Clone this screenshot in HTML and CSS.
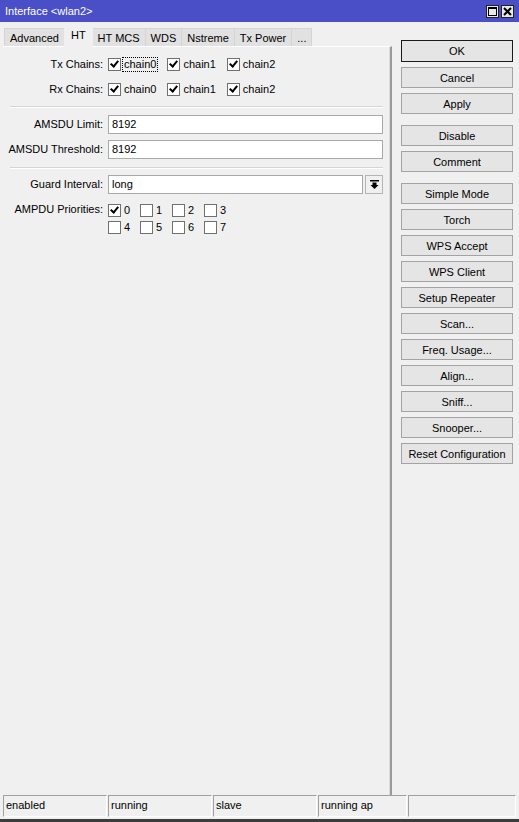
FILE: index.html
```html
<!DOCTYPE html>
<html lang="en">
<head>
  <meta charset="UTF-8">
  <title>Interface &lt;wlan2&gt;</title>
  <link rel="stylesheet" href="styles.css">
</head>
<body>

<div class="window">
  <div class="titlebar">
    <span class="title">Interface &lt;wlan2&gt;</span>
    <div class="winbtns">
      <span class="winbtn"><svg width="9" height="9" viewBox="0 0 9 9"><rect x="0.5" y="0.5" width="8" height="8" fill="none" stroke="#000"/><rect x="0" y="0" width="9" height="2" fill="#000"/></svg></span>
      <span class="winbtn"><svg width="9" height="9" viewBox="0 0 9 9"><path d="M1 1 L8 8 M8 1 L1 8" stroke="#000" stroke-width="2"/></svg></span>
    </div>
  </div>

  <div class="main">
    <div class="left">
      <div class="tabs">
        <span class="tab">Advanced</span>
        <span class="tab active">HT</span>
        <span class="tab">HT MCS</span>
        <span class="tab">WDS</span>
        <span class="tab">Nstreme</span>
        <span class="tab">Tx Power</span>
        <span class="tab">...</span>
      </div>

      <div class="panel">
        <div class="row">
          <label class="lbl">Tx Chains:</label>
          <div class="checks">
            <span class="chk on"><i></i><b class="focus">chain0</b></span>
            <span class="chk on"><i></i><b>chain1</b></span>
            <span class="chk on"><i></i><b>chain2</b></span>
          </div>
        </div>
        <div class="row">
          <label class="lbl">Rx Chains:</label>
          <div class="checks">
            <span class="chk on"><i></i><b>chain0</b></span>
            <span class="chk on"><i></i><b>chain1</b></span>
            <span class="chk on"><i></i><b>chain2</b></span>
          </div>
        </div>

        <div class="sep"></div>

        <div class="row">
          <label class="lbl">AMSDU Limit:</label>
          <div class="field">8192</div>
        </div>
        <div class="row">
          <label class="lbl">AMSDU Threshold:</label>
          <div class="field">8192</div>
        </div>

        <div class="sep wide"></div>

        <div class="row">
          <label class="lbl">Guard Interval:</label>
          <div class="field">long</div>
          <span class="drop"><svg width="9" height="9" viewBox="0 0 9 9"><rect x="0" y="0" width="9" height="1.5" fill="#000"/><path d="M2.5 2.5 H6.5 V5 H8.5 L4.5 9 L0.5 5 H2.5 Z" fill="#000"/></svg></span>
        </div>
        <div class="row top">
          <label class="lbl">AMPDU Priorities:</label>
          <div class="grid">
            <span class="chk on"><i></i><b>0</b></span>
            <span class="chk"><i></i><b>1</b></span>
            <span class="chk"><i></i><b>2</b></span>
            <span class="chk"><i></i><b>3</b></span>
            <span class="chk"><i></i><b>4</b></span>
            <span class="chk"><i></i><b>5</b></span>
            <span class="chk"><i></i><b>6</b></span>
            <span class="chk"><i></i><b>7</b></span>
          </div>
        </div>
      </div>
    </div>

    <div class="buttons">
      <div class="group">
        <button class="default">OK</button>
        <button>Cancel</button>
        <button>Apply</button>
      </div>
      <div class="group">
        <button>Disable</button>
        <button>Comment</button>
      </div>
      <div class="group">
        <button>Simple Mode</button>
        <button>Torch</button>
        <button>WPS Accept</button>
        <button>WPS Client</button>
        <button>Setup Repeater</button>
        <button>Scan...</button>
        <button>Freq. Usage...</button>
        <button>Align...</button>
        <button>Sniff...</button>
        <button>Snooper...</button>
        <button>Reset Configuration</button>
      </div>
    </div>
  </div>

  <div class="status">
    <span class="cell">enabled</span>
    <span class="cell">running</span>
    <span class="cell">slave</span>
    <span class="cell w2">running ap</span>
    <span class="cell last"></span>
  </div>
</div>

</body>
</html>
```

FILE: styles.css
```css
body {
  margin: 0;
  font-family: 'Liberation Sans', Arial, sans-serif;
  font-size: 11px;
  color: #000;
  background: #f0f0f0;
}
.window {
  width: 519px;
  height: 822px;
  display: flex;
  flex-direction: column;
  background: #f0f0f0;
  border-bottom: 3px solid #3c3c3c;
  box-sizing: border-box;
  white-space: nowrap;
}
.titlebar {
  height: 22px;
  background: #4a4fc7;
  display: flex;
  align-items: center;
  justify-content: space-between;
  padding: 0 5px;
  flex-shrink: 0;
}
.title {
  color: #fff;
  font-size: 11px;
}
.winbtns {
  display: flex;
  gap: 2px;
}
.winbtn {
  width: 13px;
  height: 13px;
  background: #e8e8e8;
  border: 1px solid #222;
  display: flex;
  align-items: center;
  justify-content: center;
  box-sizing: border-box;
}
.main {
  flex: 1;
  display: flex;
  min-height: 0;
}
.left {
  width: 392px;
  flex-shrink: 0;
  display: flex;
  flex-direction: column;
  padding: 5px 0 0 3px;
  box-sizing: border-box;
}
.tabs {
  display: flex;
  align-items: flex-end;
  height: 19px;
}
.tab {
  height: 18px;
  line-height: 18px;
  padding: 0 5px;
  background: #e1e1e1;
  border: 1px solid #d4d4d4;
  border-bottom: none;
  margin-left: -1px;
  box-sizing: border-box;
}
.tab:first-child {
  margin-left: 1px;
}
.tab.active {
  height: 21px;
  line-height: 19px;
  background: #f0f0f0;
  border: none;
  padding: 0 7px;
  position: relative;
  top: 1px;
}
.panel {
  flex: 1;
  border-top: 1px solid #fff;
  border-right: 2px solid #9a9a9a;
  box-shadow: inset -1px 0 0 #dcdcdc;
  padding: 7px 7px 0 0;
}
.row {
  display: flex;
  align-items: center;
  height: 20px;
  margin-bottom: 5px;
}
.row.top {
  align-items: flex-start;
  height: auto;
  margin-top: 8px;
}
.lbl {
  width: 100px;
  text-align: right;
  padding-right: 5px;
  flex-shrink: 0;
}
.row.top .lbl {
  padding-top: 1px;
}
.checks {
  display: flex;
  gap: 10px;
}
.chk {
  display: inline-flex;
  align-items: center;
  gap: 2px;
}
.chk i {
  width: 11px;
  height: 11px;
  border: 1px solid #707070;
  background: #fff;
  position: relative;
}
.chk.on i::after {
  content: '';
  position: absolute;
  left: 3px;
  top: 0px;
  width: 3px;
  height: 6px;
  border: solid #000;
  border-width: 0 2px 2px 0;
  transform: rotate(40deg);
}
.chk b {
  font-weight: normal;
  padding: 0 1px;
  line-height: 13px;
}
.chk b.focus {
  outline: 1px dotted #000;
}
.grid {
  display: grid;
  grid-template-columns: repeat(4, 32px);
  grid-auto-rows: 17px;
}
.field {
  flex: 1;
  height: 19px;
  line-height: 17px;
  border: 1px solid #a9a9a9;
  background: #fff;
  padding: 0 3px;
  box-sizing: border-box;
}
.drop {
  width: 18px;
  height: 19px;
  margin-left: 2px;
  border: 1px solid #b4b4b4;
  background: #f0f0f0;
  display: flex;
  align-items: center;
  justify-content: center;
  box-sizing: border-box;
}
.sep {
  height: 1px;
  background: #d5d5d5;
  border-bottom: 1px solid #fff;
  margin: 7px 0 6px 7px;
}
.sep.wide {
  margin: 8px 0 5px 7px;
}
.buttons {
  flex: 1;
  padding: 18px 6px 0 9px;
  display: flex;
  flex-direction: column;
  gap: 11px;
}
.group {
  display: flex;
  flex-direction: column;
  gap: 5px;
}
button {
  height: 21px;
  font-family: 'Liberation Sans', Arial, sans-serif;
  font-size: 11px;
  background: #e5e5e5;
  border: 1px solid #a3a3a3;
  padding: 0;
  color: #000;
}
button.default {
  border: 1px solid #1a1a1a;
  height: 22px;
}
.status {
  height: 22px;
  display: flex;
  gap: 1px;
  padding: 0 3px 2px 3px;
  flex-shrink: 0;
}
.cell {
  width: 104px;
  border-top: 1px solid #a0a0a0;
  border-left: 1px solid #a0a0a0;
  border-right: 1px solid #fff;
  border-bottom: 1px solid #fff;
  padding: 3px 2px 0;
  box-sizing: border-box;
}
.cell.w2 {
  width: 89px;
}
.cell.last {
  flex: 1;
}
```
